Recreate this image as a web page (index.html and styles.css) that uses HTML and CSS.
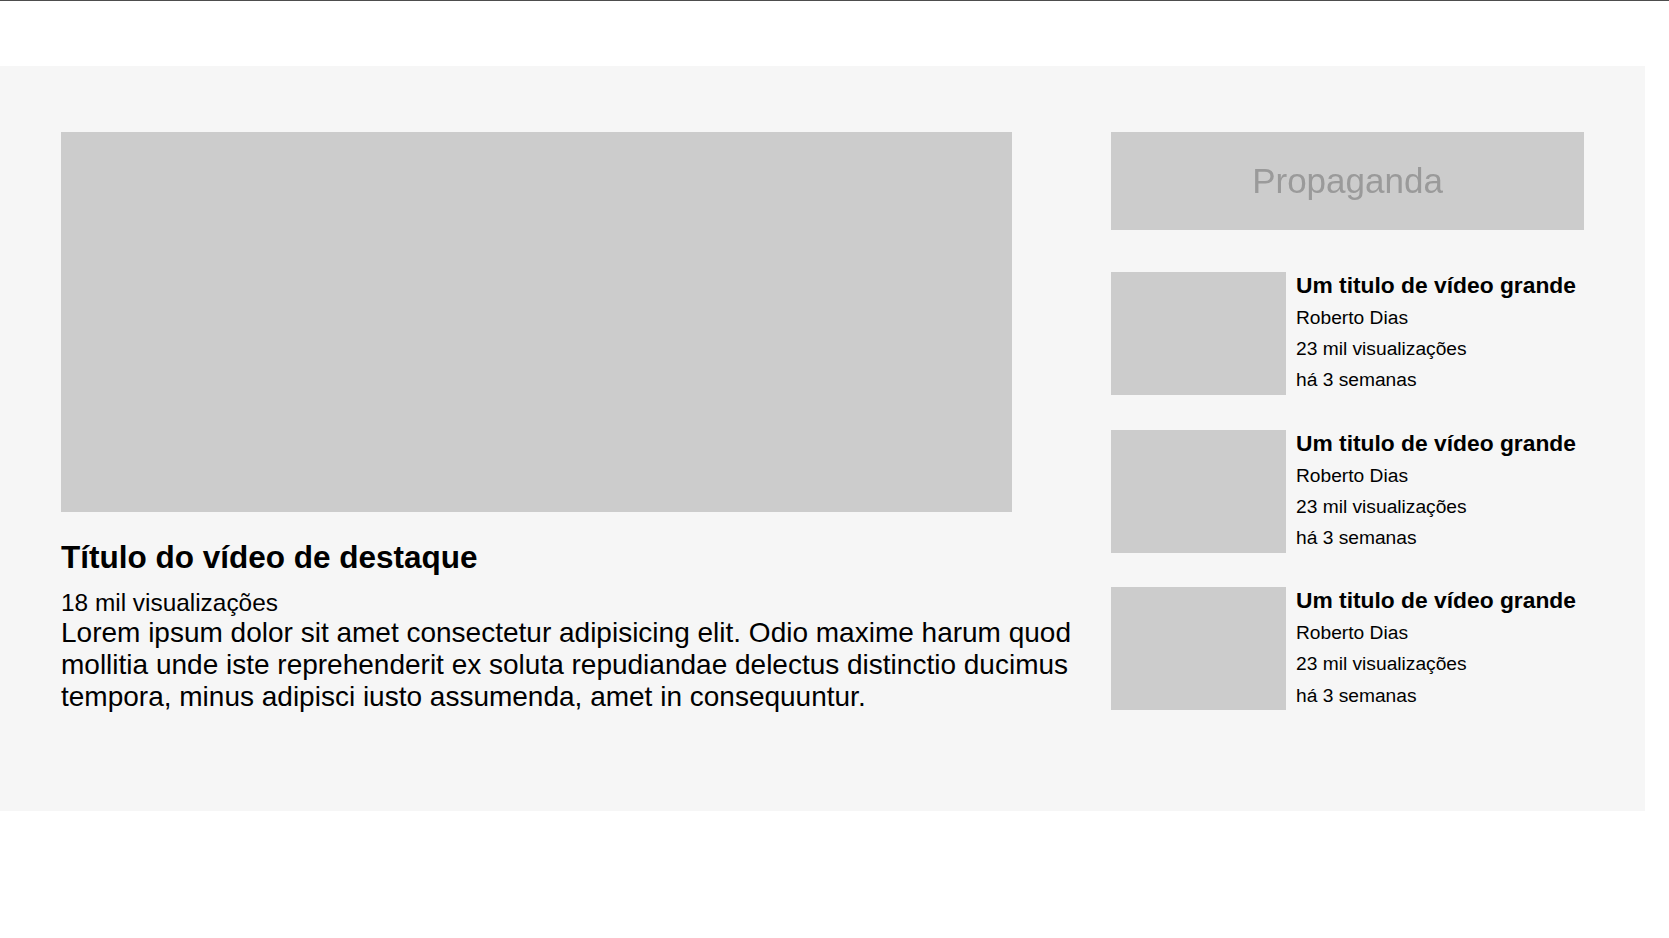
FILE: index.html
```html
<!DOCTYPE html>
<html lang="pt-BR">
<head>
<meta charset="utf-8">
<title>Vídeos</title>
<link rel="stylesheet" href="styles.css">
</head>
<body>
<header class="topbar"></header>
<main class="content">
  <section class="featured">
    <div class="video"></div>
    <h2 class="featured-title">Título do vídeo de destaque</h2>
    <p class="featured-views">18 mil visualizações</p>
    <p class="featured-desc">Lorem ipsum dolor sit amet consectetur adipisicing elit. Odio maxime harum quod mollitia unde iste reprehenderit ex soluta repudiandae delectus distinctio ducimus tempora, minus adipisci iusto assumenda, amet in consequuntur.</p>
  </section>
  <aside class="sidebar">
    <div class="ad"><span class="ad-text">Propaganda</span></div>
    <ul class="list">
      <li class="item">
        <div class="thumb"></div>
        <div class="info">
          <h3 class="item-title">Um titulo de vídeo grande</h3>
          <p class="meta">Roberto Dias</p>
          <p class="meta">23 mil visualizações</p>
          <p class="meta">há 3 semanas</p>
        </div>
      </li>
      <li class="item">
        <div class="thumb"></div>
        <div class="info">
          <h3 class="item-title">Um titulo de vídeo grande</h3>
          <p class="meta">Roberto Dias</p>
          <p class="meta">23 mil visualizações</p>
          <p class="meta">há 3 semanas</p>
        </div>
      </li>
      <li class="item">
        <div class="thumb"></div>
        <div class="info">
          <h3 class="item-title">Um titulo de vídeo grande</h3>
          <p class="meta">Roberto Dias</p>
          <p class="meta">23 mil visualizações</p>
          <p class="meta">há 3 semanas</p>
        </div>
      </li>
    </ul>
  </aside>
</main>
</body>
</html>
```

FILE: styles.css
```css
* {
  box-sizing: border-box;
}

html, body {
  margin: 0;
  padding: 0;
  background: #ffffff;
}

body {
  font-family: "Liberation Sans", Arial, sans-serif;
  color: #000;
}

.topbar {
  height: 66px;
  border-top: 1px solid #4d4d4d;
}

.content {
  width: 1645px;
  background: #f6f6f6;
  padding: 66px 61px 98px 61px;
  display: grid;
  grid-template-columns: 1fr 473px;
  column-gap: 32px;
  align-items: start;
}

.featured {
  min-width: 0;
}

.video {
  width: 951px;
  height: 380px;
  background: #cccccc;
}

.featured-title {
  margin: 27px 0 0 0;
  font-size: 31.5px;
  font-weight: bold;
  line-height: 36px;
}

.featured-views {
  margin: 13.5px 0 0 0;
  font-size: 24.4px;
  line-height: 28px;
}

.featured-desc {
  margin: 0;
  font-size: 28px;
  line-height: 32.2px;
}

.sidebar {
  display: flex;
  flex-direction: column;
}

.ad {
  height: 98px;
  background: #cccccc;
  display: flex;
  align-items: center;
  justify-content: center;
}

.ad-text {
  display: inline-block;
  font-size: 35px;
  color: #9a9a9a;
  filter: blur(0.5px);
}

.list {
  list-style: none;
  margin: 42px 0 0 0;
  padding: 0;
  display: flex;
  flex-direction: column;
  gap: 34px;
}

.item {
  display: flex;
  align-items: flex-start;
  gap: 10px;
}

.thumb {
  width: 175px;
  height: 123px;
  flex: none;
  background: #cccccc;
}

.info {
  min-width: 0;
}

.item-title {
  margin: 0 0 4px 0;
  font-size: 22.8px;
  font-weight: bold;
  line-height: 26px;
}

.meta {
  margin: 0;
  font-size: 19.2px;
  line-height: 31.2px;
}
```
